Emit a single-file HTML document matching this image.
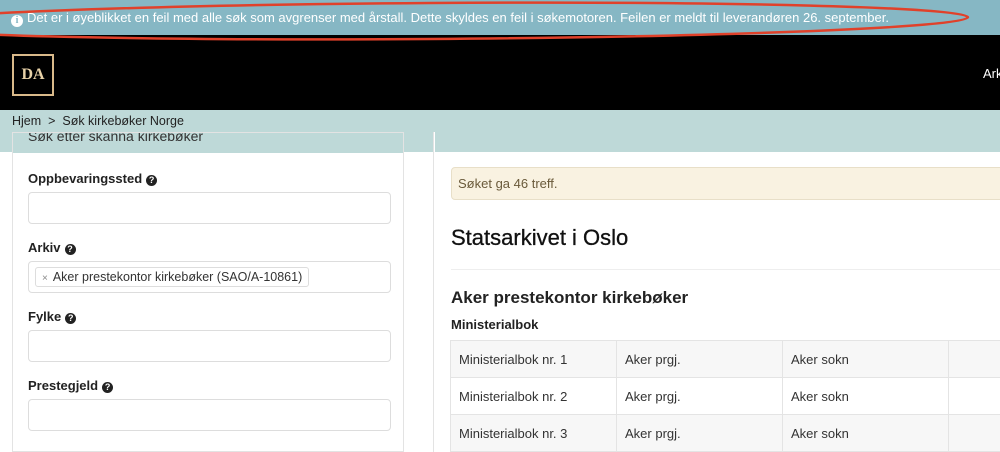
<!DOCTYPE html>
<html><head><meta charset="utf-8"><style>
*{box-sizing:border-box;margin:0;padding:0}
body{width:1000px;height:435px;overflow:hidden;font-family:"Liberation Sans",sans-serif;background:#fff;position:relative}
.banner{position:absolute;left:0;top:0;width:1000px;height:35px;background:#86b7c4;color:#fff;font-size:13px;line-height:35px;padding-left:11px}
.banner .i{display:inline-block;width:12px;height:12px;border-radius:50%;background:#fff;color:#86b7c4;font-size:10px;line-height:12px;text-align:center;font-weight:bold;font-family:"Liberation Serif",serif;vertical-align:-1px;margin-right:4px}
.hdr{position:absolute;left:0;top:35px;width:1000px;height:75px;background:#000}
.logo{position:absolute;left:12px;top:19px;width:42px;height:42px;border:2px solid #d9b98a;color:#e8d2a8;font-family:"Liberation Serif",serif;font-weight:bold;font-size:16px;text-align:center;line-height:38px}
.ark{position:absolute;left:983px;top:31px;color:#fff;font-size:13px}
.crumb{position:absolute;left:0;top:110px;width:1000px;height:42px;background:#bed9d8}
.crumb span{position:absolute;left:12px;top:4px;font-size:12.5px;color:#222}
.lp{position:absolute;left:12px;top:132px;width:392px;height:320px;background:#fff;border:1px solid #e3e3e3}
.lp .h{height:20px;background:#bed9d8;font-size:14px;color:#333;padding-left:15px;line-height:6px;overflow:hidden}
.lbl{position:absolute;left:15px;font-weight:bold;font-size:13px;color:#222}
.q{display:inline-block;width:11px;height:11px;border-radius:50%;background:#222;color:#fff;font-size:9px;line-height:11px;text-align:center;vertical-align:0;margin-left:4px}
.inp{position:absolute;left:15px;width:363px;height:32px;border:1px solid #ddd;border-radius:4px;background:#fff}
.tag{position:absolute;left:6px;top:5px;height:20px;border:1px solid #ddd;border-radius:3px;font-size:12.5px;color:#333;line-height:18px;padding:0 6px}
.tag b{color:#888;font-size:10px;margin-right:5px;font-weight:normal}
.rp{position:absolute;left:433px;top:132px;width:580px;height:320px;background:#fff;border-left:1px solid #e3e3e3}
.rp .t{position:absolute;top:0;width:100%;height:20px;background:#bed9d8;left:1px}
.alert{position:absolute;left:17px;top:35px;width:600px;height:33px;background:#f9f2e1;border:1px solid #e8dfc8;border-radius:4px;font-size:13px;color:#6a5a3a;line-height:31px;padding-left:6px}
h1{position:absolute;left:17px;top:93px;font-size:22px;font-weight:normal;color:#111;-webkit-text-stroke:0.3px #111}
.hr{position:absolute;left:17px;top:137px;width:600px;border-top:1px solid #eee}
h2{position:absolute;left:17px;top:156px;font-size:17px;font-weight:bold;color:#222}
h3{position:absolute;left:17px;top:185px;font-size:13px;font-weight:bold;color:#222}
table{position:absolute;left:16px;top:208px;border-collapse:collapse;font-size:13px;color:#333;table-layout:fixed;width:664px}
td{border:1px solid #e4e4e4;width:166px;height:37px;padding-left:8px}
tr:nth-child(odd){background:#f7f7f7}
</style></head><body>
<div class="banner"><span class="i">i</span>Det er i øyeblikket en feil med alle søk som avgrenser med årstall. Dette skyldes en feil i søkemotoren. Feilen er meldt til leverandøren 26. september.</div>
<div class="hdr"><div class="logo">DA</div><div class="ark">Ark</div></div>
<div class="crumb"><span>Hjem &nbsp;&gt;&nbsp; Søk kirkebøker Norge</span></div>
<div class="lp"><div class="h">Søk etter skanna kirkebøker</div>
<div class="lbl" style="top:38px">Oppbevaringssted<span class="q">?</span></div>
<div class="inp" style="top:59px"></div>
<div class="lbl" style="top:107px">Arkiv<span class="q">?</span></div>
<div class="inp" style="top:128px"><div class="tag"><b>×</b>Aker prestekontor kirkebøker (SAO/A-10861)</div></div>
<div class="lbl" style="top:176px">Fylke<span class="q">?</span></div>
<div class="inp" style="top:197px"></div>
<div class="lbl" style="top:245px">Prestegjeld<span class="q">?</span></div>
<div class="inp" style="top:266px"></div>
</div>
<div class="rp"><div class="t"></div>
<div class="alert">Søket ga 46 treff.</div>
<h1>Statsarkivet i Oslo</h1><div class="hr"></div>
<h2>Aker prestekontor kirkebøker</h2><h3>Ministerialbok</h3>
<table><tr><td>Ministerialbok nr. 1</td><td>Aker prgj.</td><td>Aker sokn</td><td></td></tr>
<tr><td>Ministerialbok nr. 2</td><td>Aker prgj.</td><td>Aker sokn</td><td></td></tr>
<tr><td>Ministerialbok nr. 3</td><td>Aker prgj.</td><td>Aker sokn</td><td></td></tr></table>
</div>
<svg style="position:absolute;left:0;top:0" width="1000" height="50"><ellipse cx="430" cy="21" rx="538" ry="18" fill="none" stroke="#e0412a" stroke-width="2.5" transform="rotate(-0.4 430 21)"/></svg>
</body></html>
